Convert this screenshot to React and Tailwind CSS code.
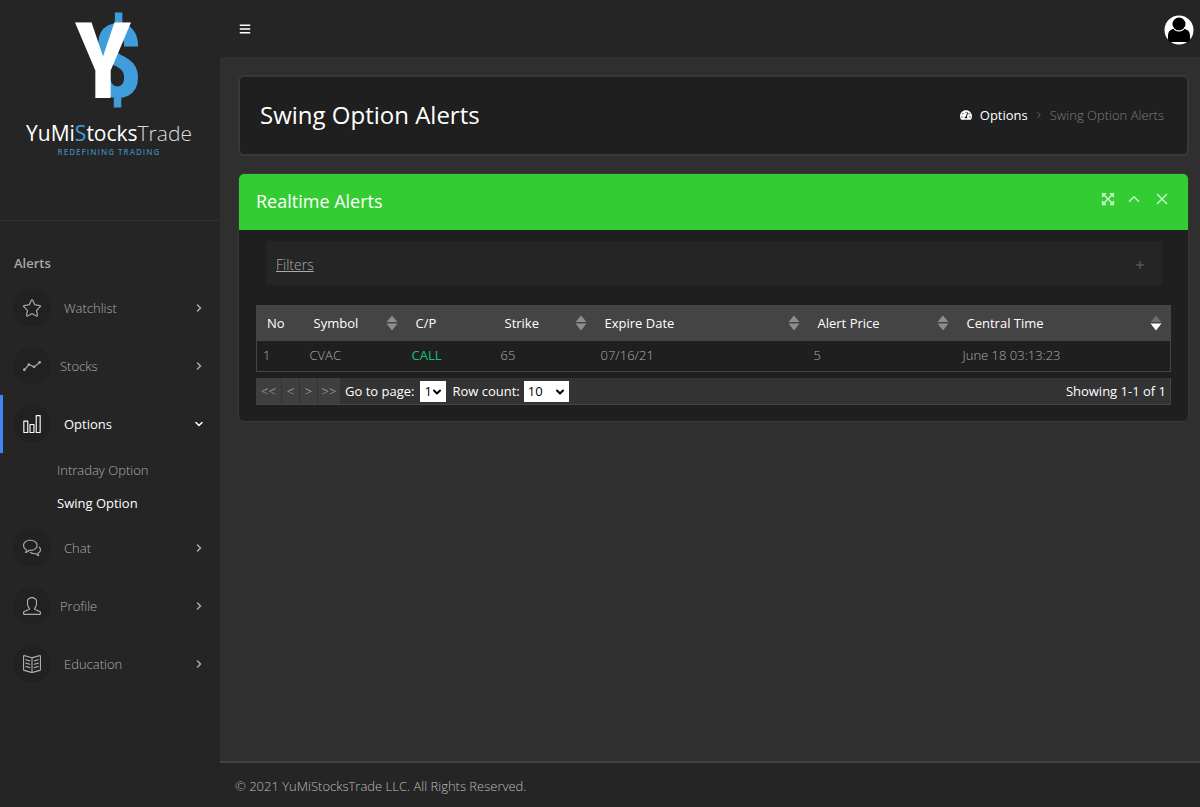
import { useState } from 'react';
import { FaBars, FaExpandArrowsAlt, FaTachometerAlt } from 'react-icons/fa';
import { SlBookOpen, SlBubbles, SlChart, SlGraph, SlStar, SlUser } from 'react-icons/sl';
import { ChevronDown, ChevronRight, ChevronUp, Plus, X } from 'lucide-react';

const navItems = [
  { label: 'Watchlist', icon: SlStar },
  { label: 'Stocks', icon: SlGraph, tight: true },
  {
    label: 'Options',
    icon: SlChart,
    open: true,
    children: [{ label: 'Intraday Option' }, { label: 'Swing Option', active: true }],
  },
  { label: 'Chat', icon: SlBubbles },
  { label: 'Profile', icon: SlUser, tight: true },
  { label: 'Education', icon: SlBookOpen },
];

const columns = [
  { key: 'no', label: 'No', width: 'w-[47px]' },
  { key: 'symbol', label: 'Symbol', width: 'w-[102px]', sortable: true },
  { key: 'type', label: 'C/P', width: 'w-[89px]' },
  { key: 'strike', label: 'Strike', width: 'w-[100px]', sortable: true },
  { key: 'expire', label: 'Expire Date', width: 'w-[213px]', sortable: true },
  { key: 'price', label: 'Alert Price', width: 'w-[149px]', sortable: true },
  { key: 'time', label: 'Central Time', width: 'w-[214px]', sortable: true, sorted: 'desc' },
];

const rows = [
  { no: '1', symbol: 'CVAC', type: 'CALL', strike: '65', expire: '07/16/21', price: '5', time: 'June 18 03:13:23' },
];

function Logo() {
  return (
    <svg viewBox="0 0 220 165" className="block w-full" role="img" aria-label="YuMiStocksTrade">
      <g fontFamily="'Roboto Condensed', Roboto, sans-serif" fontWeight="700" textAnchor="middle">
        <text x="117" y="97" fontSize="102" fill="#3f9ddb">$</text>
        <text x="103" y="98" fontSize="106" fill="#ffffff">Y</text>
      </g>
      <g fontFamily="'Open Sans', sans-serif" textAnchor="middle">
        <text x="109" y="141" fontSize="21" fontWeight="500" fill="#ffffff">
          YuMi<tspan fill="#3f9ddb">S</tspan>tocks<tspan fontWeight="300" fill="#dddddd">Trade</tspan>
        </text>
        <text x="109" y="155" fontSize="8" fontWeight="600" letterSpacing="1" fill="#3c81ae">REDEFINING TRADING</text>
      </g>
    </svg>
  );
}

function NavItem({ item }) {
  const Icon = item.icon;
  const Chevron = item.open ? ChevronDown : ChevronRight;

  return (
    <li>
      <a
        href="#"
        className={`flex h-[58px] items-center border-l-[3px] pr-[15px] pl-[10px] ${
          item.open ? 'border-[#4285f4] text-white' : 'border-transparent text-[#acacac]'
        }`}
      >
        <span className="flex h-[38px] w-[38px] items-center justify-center rounded-full bg-[#212121]">
          <Icon className="h-[18px] w-[18px]" />
        </span>
        <span className={`flex-1 ${item.tight ? 'pl-[9px]' : 'pl-[13px]'} ${item.open ? '' : 'font-light'}`}>
          {item.label}
        </span>
        <Chevron className="h-3 w-3" strokeWidth={3} />
      </a>
      {item.children && (
        <ul>
          {item.children.map((child) => (
            <li key={child.label}>
              <a
                href="#"
                className={`flex h-[33px] items-center pl-[57px] ${
                  child.active ? 'text-white' : 'font-light text-[#acacac]'
                }`}
              >
                {child.label}
              </a>
            </li>
          ))}
        </ul>
      )}
    </li>
  );
}

function SortIcon({ sorted }) {
  return (
    <svg viewBox="0 0 12 16" className="h-4 w-3 shrink-0">
      <path d="M6 0.5 L11.5 7 H0.5 Z" fill={sorted ? '#6c6c6c' : '#8d8d8d'} />
      <path d="M6 15.5 L11.5 8.5 H0.5 Z" fill={sorted === 'desc' ? '#ffffff' : '#8d8d8d'} />
    </svg>
  );
}

function AlertsTable() {
  return (
    <table className="w-full table-fixed border-collapse border border-[#454545] text-left">
      <thead>
        <tr className="h-[35px] bg-[#444444] text-white">
          {columns.map((col) => (
            <th key={col.key} className={`${col.width} pr-2 pl-[10px] font-medium`}>
              <span className="flex items-center justify-between">
                {col.label}
                {col.sortable && <SortIcon sorted={col.sorted} />}
              </span>
            </th>
          ))}
        </tr>
      </thead>
      <tbody>
        {rows.map((row) => (
          <tr key={row.no} className="h-[31px] font-light text-[#acacac]">
            {columns.map((col) => (
              <td key={col.key} className={`pb-[2px] pl-[6px] ${col.key === 'type' ? 'font-normal text-[#10c27c]' : ''}`}>
                {row[col.key]}
              </td>
            ))}
          </tr>
        ))}
      </tbody>
    </table>
  );
}

function Pager() {
  const [page, setPage] = useState('1');
  const [count, setCount] = useState('10');

  return (
    <div className="mt-[6px] flex h-[27px] items-center border-r border-b border-[#454545] bg-[#333333] pr-1 text-white">
      <div className="flex h-full gap-px pr-[5px] font-light text-[#bbbbbb]">
        <button className="w-[25px] bg-[#3f3f3f]">&lt;&lt;</button>
        <button className="w-[17px] bg-[#3f3f3f]">&lt;</button>
        <button className="w-[17px] bg-[#3f3f3f]">&gt;</button>
        <button className="w-[22px] bg-[#3f3f3f]">&gt;&gt;</button>
      </div>
      <label htmlFor="page">Go to page:</label>
      <span className="relative ml-[6px] flex">
        <select
          id="page"
          value={page}
          onChange={(e) => setPage(e.target.value)}
          className="h-[21px] w-[26px] appearance-none bg-white pl-1 text-black"
        >
          <option>1</option>
        </select>
        <ChevronDown className="pointer-events-none absolute top-[5px] right-[3px] h-3 w-3 text-black" strokeWidth={4} />
      </span>
      <label htmlFor="count" className="ml-[6px]">Row count:</label>
      <span className="relative ml-1 flex">
        <select
          id="count"
          value={count}
          onChange={(e) => setCount(e.target.value)}
          className="h-[21px] w-[45px] appearance-none bg-white pl-1 text-black"
        >
          <option>10</option>
          <option>25</option>
          <option>50</option>
        </select>
        <ChevronDown className="pointer-events-none absolute top-[5px] right-[3px] h-3 w-3 text-black" strokeWidth={4} />
      </span>
      <span className="ml-auto">Showing 1-1 of 1</span>
    </div>
  );
}

function App() {
  return (
    <div className="flex min-h-screen bg-[#2f2f2f] font-['Open_Sans',sans-serif] text-[13px] leading-5">
      <aside className="w-[220px] shrink-0 bg-[#252525]">
        <div className="h-[221px] border-b border-[#303030]">
          <Logo />
        </div>
        <nav>
          <h2 className="mt-8 mb-[6px] pl-[14px] font-semibold text-[#a8a8a8]">Alerts</h2>
          <ul>
            {navItems.map((item) => (
              <NavItem key={item.label} item={item} />
            ))}
          </ul>
        </nav>
      </aside>

      <div className="flex min-w-0 flex-1 flex-col">
        <header className="flex h-[57px] items-center justify-between bg-[#252525] pr-[6px] pl-[19px]">
          <button aria-label="Toggle menu" className="text-white">
            <FaBars className="h-3 w-3" />
          </button>
          <button aria-label="Account" className="pt-[2px]">
            <svg viewBox="0 0 30 30" className="h-[30px] w-[30px]">
              <circle cx="15" cy="15" r="14.5" fill="#ffffff" />
              <path d="M4 24 V21 C4 16 7 14 10 14 C12 16.8 18 16.8 20 14 C23 14 26 16 26 21 V24 C26 26 25 27 23 27 H7 C5 27 4 26 4 24 Z" fill="#000000" />
              <circle cx="15" cy="9" r="6.5" fill="#000000" />
              <path d="M10 14 C12 16.8 18 16.8 20 14" fill="none" stroke="#ffffff" strokeWidth="0.8" />
            </svg>
          </button>
        </header>

        <main className="flex flex-1 flex-col gap-[17px] pt-[18px] pr-[11px] pb-5 pl-[18px]">
          <section className="flex h-[81px] items-center justify-between rounded-md border-2 border-[#383838] bg-[#1f1f1f] pr-[23px] pb-[2px] pl-5">
            <h1 className="text-2xl text-white">Swing Option Alerts</h1>
            <nav className="flex items-center" aria-label="Breadcrumb">
              <a href="#" className="flex items-center gap-2 text-white">
                <FaTachometerAlt className="h-3 w-3" />
                Options
              </a>
              <ChevronRight className="mx-[6px] h-[10px] w-[10px] text-[#8a7a6a]" />
              <span className="font-light text-[#7a7e83]">Swing Option Alerts</span>
            </nav>
          </section>

          <section className="overflow-hidden rounded-md border border-[#383838] bg-[#1f1f1f]">
            <div className="flex h-14 items-center justify-between bg-[#33cd33] pr-[17px] pb-[2px] pl-[17px]">
              <h2 className="text-lg font-medium text-white">Realtime Alerts</h2>
              <div className="flex items-center gap-[10px] pb-1 text-[#c8f5c8]">
                <button aria-label="Full screen"><FaExpandArrowsAlt className="h-[14px] w-[14px]" /></button>
                <button aria-label="Collapse"><ChevronUp className="h-[18px] w-[18px]" /></button>
                <button aria-label="Close"><X className="h-[18px] w-[18px]" /></button>
              </div>
            </div>
            <div className="px-[17px] pt-[11px] pb-[16px]">
              <div className="mr-[9px] mb-5 ml-[10px] flex h-11 items-center justify-between bg-[#252525] pr-4 pl-[10px] text-[#acacac]">
                <a href="#" className="pt-1 text-sm font-light underline">Filters</a>
                <button aria-label="Expand filters" className="pt-1 text-[#6a6a6a]">
                  <Plus className="h-3 w-3" />
                </button>
              </div>
              <AlertsTable />
              <Pager />
            </div>
          </section>
        </main>

        <footer className="h-[46px] border-t-2 border-[#444444] bg-[#252525] pt-[13px] pl-[15px] font-light text-[#bcbcbc]">
          © 2021 YuMiStocksTrade LLC. All Rights Reserved.
        </footer>
      </div>
    </div>
  );
}

export default App;
